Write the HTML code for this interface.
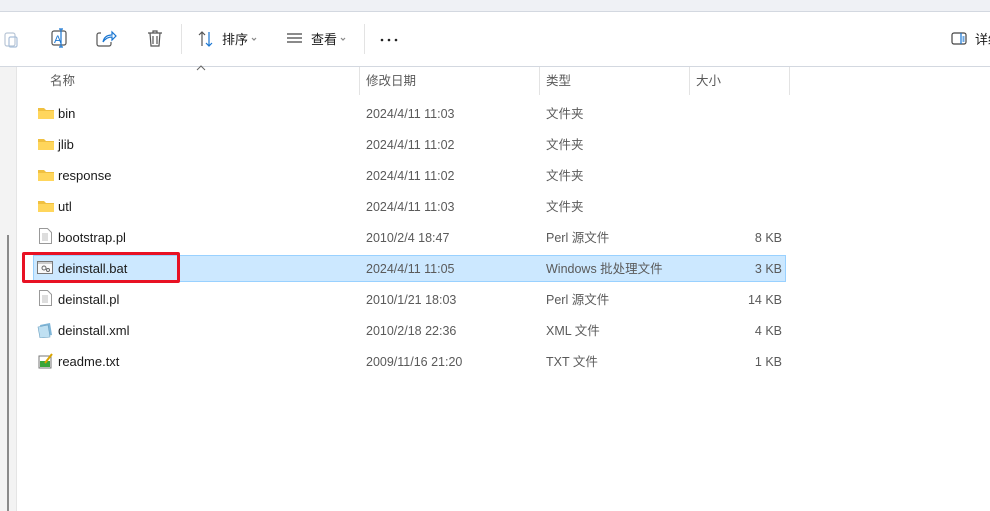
<!DOCTYPE html>
<html><head><meta charset="utf-8"><style>
body{margin:0;width:990px;height:511px;overflow:hidden;background:#fff;font-family:"Liberation Sans","Noto Sans CJK SC",sans-serif;position:relative}
.a{position:absolute}
.top{left:0;top:0;width:990px;height:11px;background:#eff1f5;border-bottom:1px solid #d3d8e0}
.tb{left:0;top:12px;width:990px;height:54px;background:#fff;border-bottom:1px solid #d3d8e0}
.side{left:0;top:67px;width:16px;height:444px;background:#f3f3f3;border-right:1px solid #e5e5e5}
.t{font-size:13px;line-height:16px;height:16px;color:#1a1a1a;white-space:nowrap}
.g{font-size:12.5px;line-height:16px;height:16px;color:#5a5a5a;white-space:nowrap}
.sep{width:1px;height:28px;background:#e3e3e3;top:67px}
</style></head><body>
<div class="a top"></div>
<div class="a tb"></div>
<svg class="a" style="left:0;top:26px" width="400" height="28" viewBox="0 0 400 28" fill="none" stroke-width="1.2">
<rect x="5" y="7" width="10" height="13" rx="2" stroke="#b9c6d6"/><rect x="9" y="11" width="8" height="10" rx="1.5" stroke="#a9bfd9"/>
<rect x="52" y="5" width="14" height="14" rx="2" stroke="#555"/><text x="54" y="17" font-size="11" fill="#1976d2" stroke="none" font-family="Liberation Sans">A</text><path d="M61 3v18M59 3h4M59 21h4" stroke="#1976d2"/>
<path d="M101 7h-2a2 2 0 0 0-2 2v9a2 2 0 0 0 2 2h10a2 2 0 0 0 2-2v-2" stroke="#555"/><path d="M103 16c1-5 4-7 9-7v-3l4 4-4 4v-3c-4 0-7 2-9 5" stroke="#1976d2"/>
<path d="M148 7h14M153 7v-2h4v2M150 7l1 13h8l1-13M153 10v8M157 10v8" stroke="#555"/>
<path d="M202 6v14M199 9l3-3 3 3" stroke="#555"/><path d="M209 6v14M206 17l3 3 3-3" stroke="#1976d2"/>
<path d="M287 8h15M287 12h15M287 16h15" stroke="#444"/>
<path d="M252 12l2 2 2-2M341 12l2 2 2-2" stroke="#888"/>
<circle cx="382" cy="14" r="1.3" fill="#222" stroke="none"/><circle cx="389" cy="14" r="1.3" fill="#222" stroke="none"/><circle cx="396" cy="14" r="1.3" fill="#222" stroke="none"/>
</svg>
<div class="a" style="left:181px;top:24px;width:1px;height:30px;background:#e3e3e3"></div>
<div class="a" style="left:364px;top:24px;width:1px;height:30px;background:#e3e3e3"></div>
<div class="a t" style="left:222px;top:32px">排序</div>
<div class="a t" style="left:311px;top:32px">查看</div>
<svg class="a" style="left:950px;top:31px" width="20" height="16" fill="none"><rect x="2" y="2" width="14" height="11" rx="2" stroke="#444" stroke-width="1.2"/><path d="M11 2v11M12.5 6h2M12.5 8h2M12.5 10h2" stroke="#1976d2" stroke-width="1.2"/></svg>
<div class="a t" style="left:975px;top:32px">详细</div>
<div class="a side"></div>
<div class="a" style="left:7px;top:235px;width:2px;height:276px;background:#8a8a8a"></div>
<svg class="a" style="left:196px;top:65px" width="10" height="6" fill="none"><path d="M1 5l4-4 4 4" stroke="#666"/></svg>
<div class="a g" style="left:50px;top:73px">名称</div>
<div class="a g" style="left:366px;top:73px">修改日期</div>
<div class="a g" style="left:546px;top:73px">类型</div>
<div class="a g" style="left:696px;top:73px">大小</div>
<div class="a sep" style="left:359px"></div><div class="a sep" style="left:539px"></div><div class="a sep" style="left:689px"></div><div class="a sep" style="left:789px"></div>
<div class="a" style="left:33px;top:255px;width:751px;height:25px;background:#cce8ff;border:1px solid #99d1ff"></div>
<div class="a" style="left:22px;top:252px;width:152px;height:25px;border:3px solid #e81123;border-radius:2px"></div>
<div id="rows"></div>
<script>
var R=[["bin","2024/4/11 11:03","文件夹","","f"],["jlib","2024/4/11 11:02","文件夹","","f"],["response","2024/4/11 11:02","文件夹","","f"],["utl","2024/4/11 11:03","文件夹","","f"],["bootstrap.pl","2010/2/4 18:47","Perl 源文件","8 KB","d"],["deinstall.bat","2024/4/11 11:05","Windows 批处理文件","3 KB","b"],["deinstall.pl","2010/1/21 18:03","Perl 源文件","14 KB","d"],["deinstall.xml","2010/2/18 22:36","XML 文件","4 KB","x"],["readme.txt","2009/11/16 21:20","TXT 文件","1 KB","t"]];
var h="";R.forEach(function(r,i){var y=105+i*31;var ty=y+1;var ic="";
if(r[4]=="f")ic='<svg class="a" style="left:38px;top:'+(y+1)+'px" width="16" height="14"><path d="M0 2h6l2 2h8v9H0z" fill="#f0c040"/><rect y="5" width="16" height="8" fill="#ffd65c"/></svg>';
else if(r[4]=="d")ic='<svg class="a" style="left:39px;top:'+(y-1)+'px" width="13" height="16" fill="none"><path d="M.5.5h8l4 4v11H.5z" fill="#fff" stroke="#999"/><path d="M3 6h6M3 8h6M3 10h6M3 12h6" stroke="#bbb"/></svg>';
else if(r[4]=="b")ic='<svg class="a" style="left:37px;top:'+(y+1)+'px" width="16" height="13" fill="none"><rect x=".5" y=".5" width="15" height="12" fill="#fafafa" stroke="#777"/><rect x="1" y="1" width="14" height="2" fill="#ccc"/><circle cx="7" cy="7" r="2" stroke="#666"/><circle cx="11" cy="9" r="1.5" stroke="#666"/></svg>';
else if(r[4]=="x")ic='<svg class="a" style="left:37px;top:'+(y)+'px" width="16" height="16"><path d="M3 3l10-2 2 12-10 2z" fill="#7fb6d8"/><path d="M1 5l10-2 2 12-10 1z" fill="#bfe0f2" stroke="#6a9fc0" stroke-width=".6"/></svg>';
else ic='<svg class="a" style="left:38px;top:'+(y)+'px" width="16" height="16"><rect x="1" y="3" width="12" height="12" fill="#fff" stroke="#777"/><rect x="2" y="8" width="10" height="6" fill="#3aa53a"/><path d="M7 10l7-9" stroke="#d9a400" stroke-width="2"/></svg>';
h+=ic+'<div class="a t" style="left:58px;top:'+ty+'px">'+r[0]+'</div><div class="a g" style="left:366px;top:'+ty+'px">'+r[1]+'</div><div class="a g" style="left:546px;top:'+ty+'px">'+r[2]+'</div><div class="a g" style="right:208px;top:'+ty+'px">'+r[3]+'</div>';});
document.getElementById("rows").innerHTML=h;
</script>
</body></html>
